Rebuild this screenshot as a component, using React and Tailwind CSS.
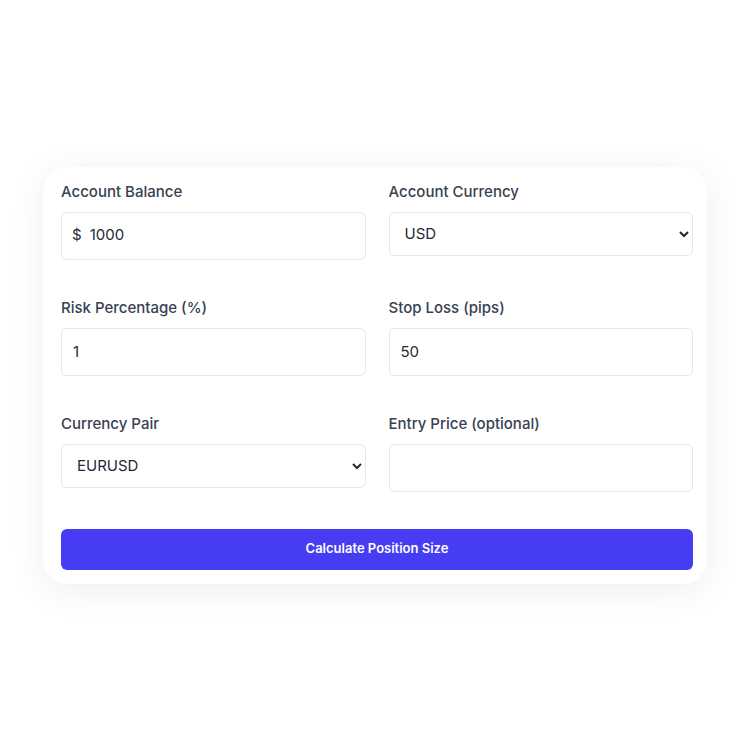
import React from "react";

function Label({ children }) {
  return (
    <label className="block text-[15px] leading-[20px] font-medium text-[#374151] mb-[10px]">
      {children}
    </label>
  );
}

function Field({ label, children }) {
  return (
    <div className="flex flex-col">
      <Label>{label}</Label>
      {children}
    </div>
  );
}

const inputCls =
  "w-full h-[48px] rounded-md border border-[#e2e6ee] bg-white px-[11px] text-[15px] text-[#1f2937] outline-none";
const selectCls =
  "w-full h-[44px] rounded-md border border-[#e2e6ee] bg-white px-[11px] text-[15px] text-[#1f2937] outline-none";

export default function App() {
  return (
    <div
      className="min-h-screen w-full flex items-center justify-center bg-white"
      style={{ fontFamily: "Inter, 'Noto Sans', sans-serif" }}
    >
      <div className="w-[664px] rounded-[24px] bg-white pl-[18px] pr-[14px] pt-[15px] pb-[14px] shadow-[0_6px_36px_rgba(0,0,0,0.07)]">
        <div className="grid grid-cols-2 gap-x-[23px] gap-y-[38px]">
          <Field label="Account Balance">
            <div className="flex items-center h-[48px] rounded-md border border-[#e2e6ee] bg-white px-[10px] text-[15px] text-[#1f2937]">
              <span className="mr-[8px]">$</span>
              <input className="flex-1 outline-none bg-transparent" defaultValue="1000" />
            </div>
          </Field>
          <Field label="Account Currency">
            <select className={selectCls} defaultValue="USD">
              <option>USD</option>
              <option>EUR</option>
              <option>GBP</option>
            </select>
          </Field>
          <Field label="Risk Percentage (%)">
            <input className={inputCls} defaultValue="1" />
          </Field>
          <Field label="Stop Loss (pips)">
            <input className={inputCls} defaultValue="50" />
          </Field>
          <Field label="Currency Pair">
            <select className={selectCls} defaultValue="EURUSD">
              <option>EURUSD</option>
              <option>GBPUSD</option>
            </select>
          </Field>
          <Field label="Entry Price (optional)">
            <input className={inputCls} defaultValue="" />
          </Field>
        </div>
        <button className="mt-[37px] w-full h-[41px] rounded-md bg-[#463cf4] text-white text-[13px] font-semibold">
          Calculate Position Size
        </button>
      </div>
    </div>
  );
}
